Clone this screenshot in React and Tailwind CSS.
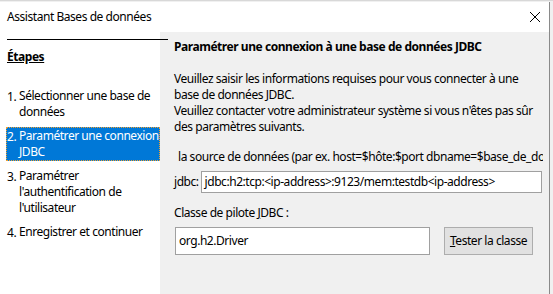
import React from 'react'

const steps = [
  { n: '1.', lines: ['Sélectionner une base de', 'données'] },
  { n: '2.', lines: ['Paramétrer une connexion', 'JDBC'], active: true },
  { n: '3.', lines: ['Paramétrer', "l'authentification de", "l'utilisateur"] },
  { n: '4.', lines: ['Enregistrer et continuer'] },
]

function Step({ step }) {
  return (
    <div
      className={
        'flex ' +
        (step.active
          ? 'bg-[#0078d7] text-white border border-dotted border-[#f0a030]'
          : 'border border-transparent')
      }
    >
      <span className="w-[12px] shrink-0">{step.n}</span>
      <div className="flex flex-col">
        {step.lines.map((l) => (
          <span key={l} className="whitespace-nowrap leading-[16px]">{l}</span>
        ))}
      </div>
    </div>
  )
}

export default function App() {
  return (
    <div
      className="w-[553px] h-[294px] overflow-hidden bg-[#f0f0f0] flex flex-col text-[12px] tracking-[-0.45px] text-black"
      style={{ fontFamily: '"Noto Sans", "Open Sans", sans-serif' }}
    >
      <div className="h-[2px] border-t border-[#d8d8d8] shrink-0" />
      <div className="flex flex-1 min-h-0">
        <div className="w-[550px] border-r border-[#8a8a8a] flex flex-col bg-white">
          {/* title bar */}
          <div className="h-[30px] flex items-center justify-between pl-[7px] pr-[8px] shrink-0">
            <span>Assistant Bases de données</span>
            <svg width="12" height="12" viewBox="0 0 12 12">
              <path d="M1 1 L11 11 M11 1 L1 11" stroke="#000" strokeWidth="1" />
            </svg>
          </div>

          <div className="flex flex-1 min-h-0">
            {/* left: steps */}
            <div className="w-[160px] shrink-0 bg-white relative">
              <div className="absolute left-[7px] top-[7px] w-[161px] h-px bg-black" />
              <div className="pt-[17px] pl-[7px] font-bold underline leading-[16px]">Étapes</div>
              <div className="mt-[22px] pl-[6px] flex flex-col gap-[6px]">
                {steps.map((s) => (
                  <Step key={s.n} step={s} />
                ))}
              </div>
            </div>

            {/* right: content */}
            <div className="flex-1 bg-[#f0f0f0] pl-[14px] pr-[6px] pt-[7px] min-w-0">
              <div className="font-bold leading-[16px]">Paramétrer une connexion à une base de données JDBC</div>
              <p className="mt-[16px] leading-[16px] whitespace-nowrap">
                Veuillez saisir les informations requises pour vous connecter à une
                <br />
                base de données JDBC.
                <br />
                Veuillez contacter votre administrateur système si vous n'êtes pas sûr
                <br />
                des paramètres suivants.
              </p>
              <div className="mt-[14px] pl-[4px] leading-[16px] whitespace-nowrap overflow-hidden">
                la source de données (par ex. host=$hôte:$port dbname=$base_de_données)
              </div>
              <div className="mt-[6px] flex items-center">
                <span className="mr-[2px]">jdbc:</span>
                <div className="w-[341px] h-[22px] bg-white border border-[#a0a0a0] flex items-center pl-[3px] whitespace-nowrap overflow-hidden">
                  jdbc:h2:tcp:&lt;ip-address&gt;:9123/mem:testdb&lt;ip-address&gt;
                </div>
              </div>
              <div className="mt-[12px] leading-[16px]">
                Classe de pilote <span className="underline">J</span>DBC :
              </div>
              <div className="mt-[6px] flex items-center">
                <div className="ml-[1px] w-[255px] h-[28px] bg-white border border-[#a0a0a0] flex items-center pl-[3px]">
                  org.h2.Driver
                </div>
                <button className="ml-[14px] w-[89px] h-[28px] bg-[#e1e1e1] border border-[#adadad] flex items-center justify-center">
                  <span><span className="underline">T</span>ester la classe</span>
                </button>
              </div>
            </div>
          </div>
        </div>
        <div className="flex-1 bg-[#f0f0f0]" />
      </div>
    </div>
  )
}
